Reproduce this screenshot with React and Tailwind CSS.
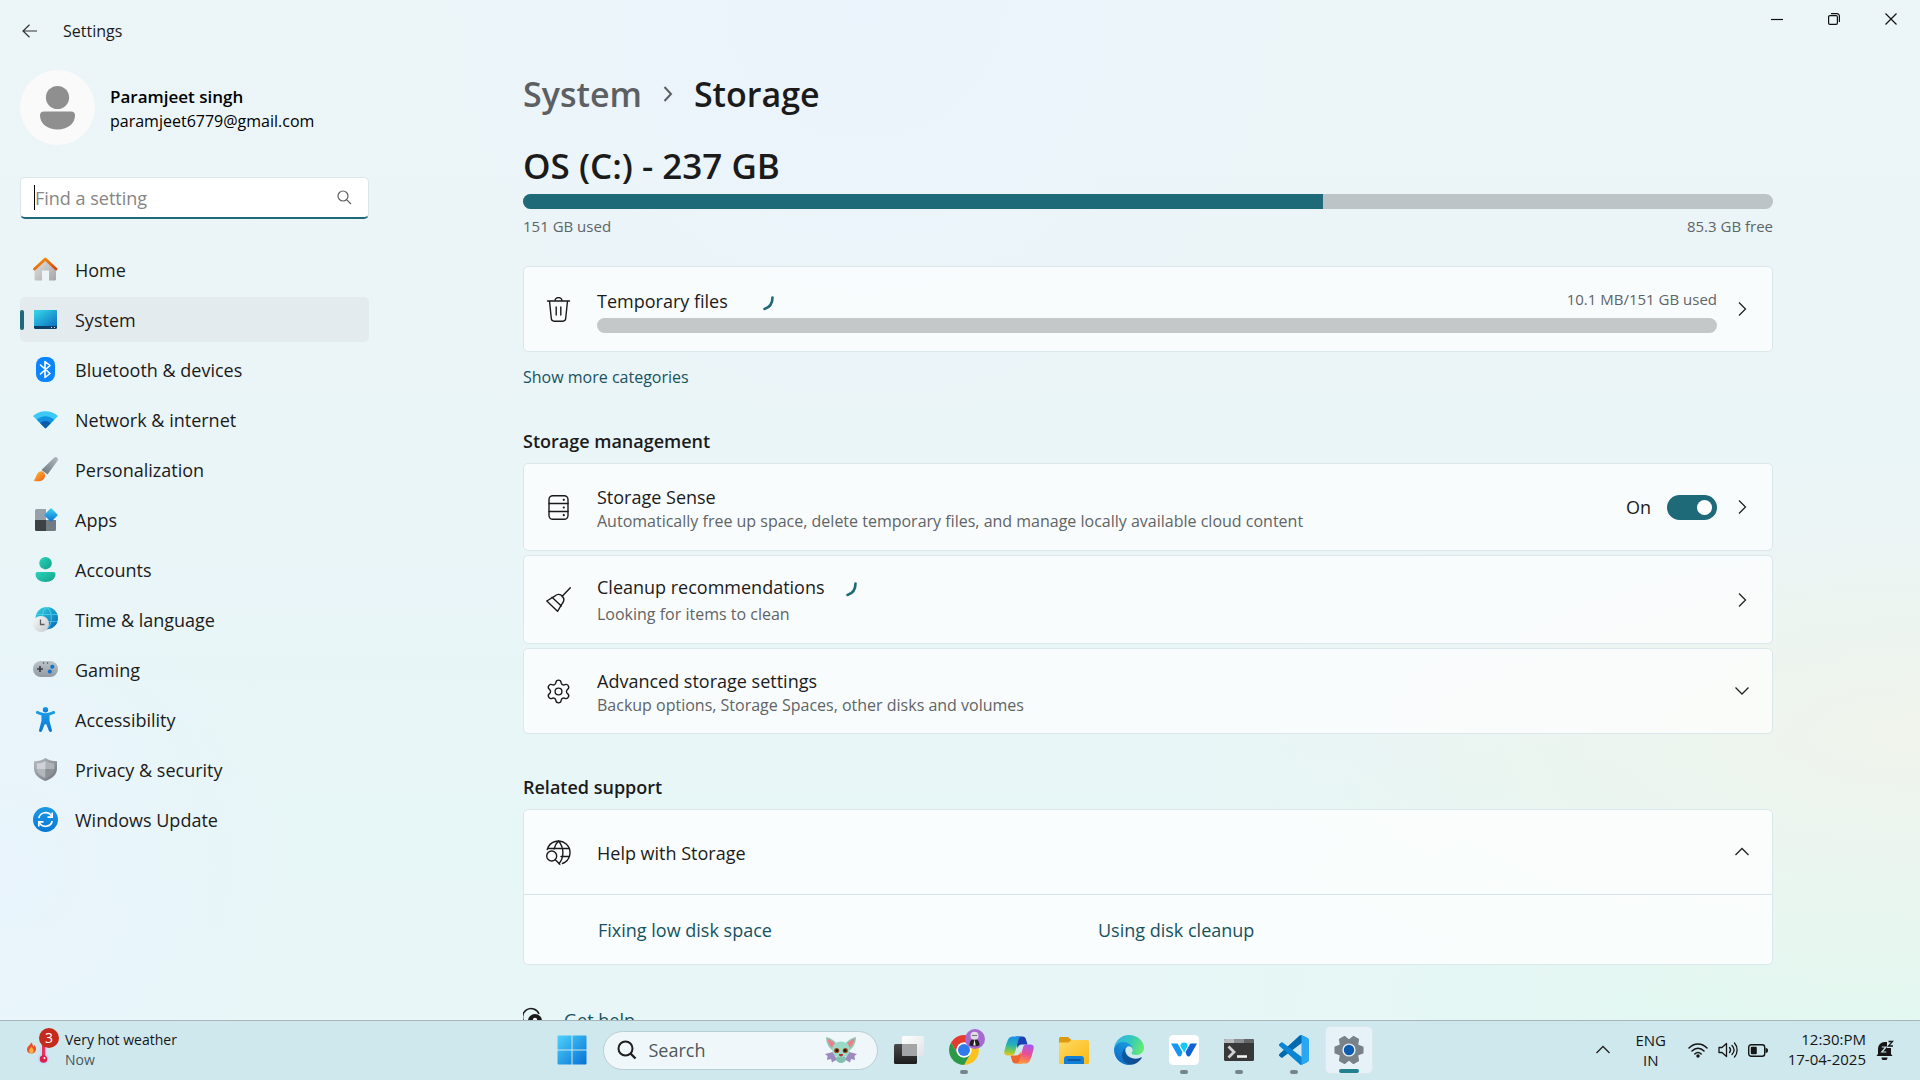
import React from "react";
import { Settings } from "lucide-react";

/* ---------- sidebar icons ---------- */

const HomeIcon = () => (
  <svg viewBox="0 0 25 25" className="size-[25px]" aria-hidden="true">
    <defs>
      <linearGradient id="homeWall" x1="0" y1="0" x2="1" y2="1">
        <stop offset="0" stopColor="#e3e3e3" />
        <stop offset="1" stopColor="#a5a5a5" />
      </linearGradient>
      <linearGradient id="homeRoof" x1="0" y1="0" x2="1" y2="1">
        <stop offset="0" stopColor="#f59b0b" />
        <stop offset="1" stopColor="#d8440f" />
      </linearGradient>
    </defs>
    <path d="M12.500 2 23 12v10a1.500 1.500 0 0 1-1.500 1.500H16V13.500H9v10H3A1.500 1.500 0 0 1 1.500 22V12Z" fill="url(#homeWall)" />
    <path d="M1.500 12 12.300 2 23 12" fill="none" stroke="url(#homeRoof)" strokeWidth="2.800" strokeLinecap="round" strokeLinejoin="round" />
  </svg>
);

const SystemIcon = () => (
  <svg viewBox="0 0 25 25" className="size-[25px]" aria-hidden="true">
    <defs>
      <linearGradient id="sysScreen" x1="0" y1="0" x2="1" y2="1">
        <stop offset="0" stopColor="#36dbe8" />
        <stop offset="1" stopColor="#0c6fc4" />
      </linearGradient>
    </defs>
    <rect x="1" y="3" width="23" height="19" rx="1.500" fill="#0b3f66" />
    <path d="M1 4.500A1.500 1.500 0 0 1 2.500 3h20A1.500 1.500 0 0 1 24 4.500V19H1Z" fill="url(#sysScreen)" />
    <path d="M18 20.500h1M21 20.500h1" stroke="#cfe6f5" strokeWidth="1" />
  </svg>
);

const BluetoothIcon = () => (
  <svg viewBox="0 0 25 25" className="size-[25px]" aria-hidden="true">
    <rect x="3" y="0" width="19" height="25" rx="8" fill="#0a84ff" />
    <path d="m7.500 8 9.500 8.500-5 4v-16l5 4L7.500 17" fill="none" stroke="#fff" strokeWidth="1.600" strokeLinejoin="round" strokeLinecap="round" />
  </svg>
);

const NetworkIcon = () => (
  <svg viewBox="0 0 25 25" className="size-[25px]" aria-hidden="true">
    <path d="M12.500 21.500 0 9C6.500 2.500 18.500 2.500 25 9Z" fill="#3cc9f5" />
    <path d="M12.500 21.500 3.800 12.800C8.500 8 16.500 8 21.200 12.800Z" fill="#1191e0" />
    <path d="M12.500 21.500 7.300 16.300C10 13.200 15 13.200 17.700 16.300Z" fill="#0b5cab" />
  </svg>
);

const BrushIcon = () => (
  <svg viewBox="0 0 25 25" className="size-[25px]" aria-hidden="true">
    <defs>
      <linearGradient id="brushHandle" x1="1" y1="0" x2="0" y2="1">
        <stop offset="0" stopColor="#b4bbc1" />
        <stop offset="1" stopColor="#68737b" />
      </linearGradient>
      <linearGradient id="brushTip" x1="0" y1="0" x2="1" y2="1">
        <stop offset="0" stopColor="#ffc233" />
        <stop offset="1" stopColor="#ee5a1c" />
      </linearGradient>
    </defs>
    <path d="M24.300.7c1 1 .8 2.300.1 3.300L14.500 17.500 8.500 13 20.800.9c1-.9 2.500-1.200 3.500-.2Z" fill="url(#brushHandle)" />
    <path d="M6.200 14.800c2.800-2 7 1.300 5.600 5.400-1.500 4.300-7.600 5-11.300 3.300C2.800 22.500 2.800 17.200 6.200 14.800Z" fill="url(#brushTip)" />
  </svg>
);

const AppsIcon = () => (
  <svg viewBox="0 0 25 25" className="size-[25px]" aria-hidden="true">
    <defs>
      <linearGradient id="appTile" x1="0" y1="0" x2="1" y2="1">
        <stop offset="0" stopColor="#40d3f3" />
        <stop offset="1" stopColor="#0a6fd0" />
      </linearGradient>
    </defs>
    <path d="M2 3.500A1.500 1.500 0 0 1 3.500 2H13v11H2Z" fill="#98a1a9" />
    <path d="M2 13h11v11H3.500A1.500 1.500 0 0 1 2 22.500Z" fill="#3d4144" />
    <path d="M13 13h10v9.500a1.500 1.500 0 0 1-1.500 1.500H13Z" fill="#737b82" />
    <rect x="-5" y="-5" width="10" height="10" rx="1.200" transform="translate(18 8) rotate(45)" fill="url(#appTile)" />
  </svg>
);

const AccountsIcon = () => (
  <svg viewBox="0 0 25 25" className="size-[25px]" aria-hidden="true">
    <defs>
      <linearGradient id="acct" x1="0" y1="0" x2="1" y2="1">
        <stop offset="0" stopColor="#2ad4bb" />
        <stop offset="1" stopColor="#14a088" />
      </linearGradient>
    </defs>
    <circle cx="12.500" cy="6.200" r="6.200" fill="url(#acct)" />
    <path d="M4.500 15h16a2 2 0 0 1 2 2c0 5-4.500 8-10 8s-10-3-10-8a2 2 0 0 1 2-2Z" fill="url(#acct)" />
  </svg>
);

const TimeIcon = () => (
  <svg viewBox="0 0 25 25" className="size-[25px]" aria-hidden="true">
    <defs>
      <linearGradient id="globe" x1="0" y1="0" x2="1" y2="1">
        <stop offset="0" stopColor="#35d6e4" />
        <stop offset="1" stopColor="#0863b5" />
      </linearGradient>
      <linearGradient id="clockFace" x1="0" y1="0" x2="1" y2="1">
        <stop offset="0" stopColor="#fafafa" />
        <stop offset="1" stopColor="#c6c9cc" />
      </linearGradient>
    </defs>
    <circle cx="13.800" cy="11.200" r="11.200" fill="url(#globe)" />
    <path d="M3.500 7.500H24M4 14.500H24M13.800 0c-6 5-6 17 0 22.400M13.800 0c6 5 6 17 0 22.400" fill="none" stroke="#5fe0ef" strokeOpacity=".6" strokeWidth="1.100" />
    <circle cx="8" cy="17" r="8" fill="url(#clockFace)" />
    <path d="M7.500 12.500V17.500h4" fill="none" stroke="#595d61" strokeWidth="1.300" />
  </svg>
);

const GamingIcon = () => (
  <svg viewBox="0 0 25 25" className="size-[25px]" aria-hidden="true">
    <defs>
      <linearGradient id="pad" x1="0" y1="0" x2="0" y2="1">
        <stop offset="0" stopColor="#bcc4ca" />
        <stop offset="1" stopColor="#939aa2" />
      </linearGradient>
    </defs>
    <rect x="0" y="4" width="25" height="16" rx="8" fill="url(#pad)" />
    <path d="M7 9v6M4 12h6" stroke="#3a3f44" strokeWidth="1.700" />
    <circle cx="19.300" cy="9.700" r="2" fill="#0a72d0" />
    <circle cx="16.800" cy="14.500" r="2" fill="#0a72d0" />
    <circle cx="10.500" cy="6" r=".8" fill="#4b5157" />
    <circle cx="14.500" cy="6" r=".8" fill="#4b5157" />
  </svg>
);

const AccessIcon = () => (
  <svg viewBox="0 0 25 25" className="size-[25px]" aria-hidden="true">
    <defs>
      <linearGradient id="acc" x1="0" y1="0" x2="0" y2="1">
        <stop offset="0" stopColor="#1a9ee6" />
        <stop offset="1" stopColor="#0a76d6" />
      </linearGradient>
    </defs>
    <circle cx="12.500" cy="2.700" r="2.700" fill="url(#acc)" />
    <path d="M3 4.700c.4-.9 1.200-1 2-.6C10 6.800 15 6.800 20 4.100c.8-.4 1.600-.3 2 .6.400.9 0 1.600-.8 2L16.500 8.500v5.300l2.400 9.200c.2.900-.2 1.700-1.100 1.900-.9.200-1.600-.2-1.900-1.100L13.300 17.200h-1.600L9.100 23.800c-.3.900-1 1.300-1.900 1.100-.9-.2-1.300-1-1.100-1.900L8.500 13.800V8.500L3.800 6.700c-.8-.4-1.200-1.100-.8-2Z" fill="url(#acc)" />
  </svg>
);

const ShieldIcon = () => (
  <svg viewBox="0 0 25 25" className="size-[25px]" aria-hidden="true">
    <defs>
      <linearGradient id="shield" x1="0" y1="0" x2="1" y2="1">
        <stop offset="0" stopColor="#b7bdc2" />
        <stop offset="1" stopColor="#6d7379" />
      </linearGradient>
    </defs>
    <path d="M12.500 1c3.500 2.500 7 3 11.500 3.200v7.300c0 6-4.500 9.800-11.500 12.500C5.500 21.300 1 17.500 1 11.500V4.200C5.500 4 9 3.500 12.500 1Z" fill="url(#shield)" />
    <path d="M12.500 4C15 5.600 18 6.300 21.300 6.500V12h-8.800Z" fill="#adb3b8" />
    <path d="M12.500 4C10 5.600 7 6.300 3.700 6.500V12h8.800Z" fill="#cfd3d7" />
    <path d="M3.700 12h8.800v9.200C7 18.900 3.900 16 3.700 12Z" fill="#b3b8bd" />
    <path d="M21.300 12h-8.800v9.200c5.500-2.300 8.600-5.200 8.800-9.200Z" fill="#8c9298" />
  </svg>
);

const UpdateIcon = () => (
  <svg viewBox="0 0 25 25" className="size-[25px]" aria-hidden="true">
    <defs>
      <linearGradient id="upd" x1="0" y1="0" x2="0" y2="1">
        <stop offset="0" stopColor="#1a9be4" />
        <stop offset="1" stopColor="#0a76d6" />
      </linearGradient>
    </defs>
    <circle cx="12.500" cy="12.500" r="12.500" fill="url(#upd)" />
    <path d="M5.800 11C7 5 15.500 3.500 18.700 9.300M19.200 14C18 20 9.500 21.500 6.300 15.700" fill="none" stroke="#fff" strokeWidth="1.700" />
    <path d="M19.200 5.500V10.200H14.500M5.800 19.500V14.800h4.700" fill="none" stroke="#fff" strokeWidth="1.700" />
  </svg>
);

/* ---------- page icons ---------- */

const Chevron = ({ dir = "right" }) => {
  const d = {
    right: "M5 1.500l6.500 6.500L5 14.500",
    down: "M1.500 4.500 8 11l6.500-6.500",
    up: "M1.500 11 8 4.500l6.500 6.500",
  }[dir];
  return (
    <svg viewBox="0 0 16 16" className="size-4 shrink-0" fill="none" stroke="#222" strokeWidth="1.300" aria-hidden="true">
      <path d={d} />
    </svg>
  );
};

const lineIcon = {
  viewBox: "0 0 25 25",
  className: "size-[25px] shrink-0",
  fill: "none",
  stroke: "#1a1a1a",
  strokeWidth: 1.4,
  strokeLinecap: "round",
  strokeLinejoin: "round",
  "aria-hidden": true,
};

const TrashIcon = () => (
  <svg {...lineIcon}>
    <path d="M1.500 4h22M9 4a3.500 3.500 0 0 1 7 0M3.500 4l1.800 17.500A3 3 0 0 0 8.200 24.200h8.600a3 3 0 0 0 2.900-2.700L21.500 4M10.200 10v8M14.800 10v8" />
  </svg>
);

const DriveStackIcon = () => (
  <svg {...lineIcon}>
    <rect x="3" y=".7" width="19" height="23.600" rx="3.800" />
    <path d="M3 8.500h19M3 16.500h19" />
    <path d="M17.800 4.800v.01M17.800 12.500v.01M17.800 20.200v.01" strokeWidth="2.200" />
  </svg>
);

const BroomIcon = () => (
  <svg {...lineIcon}>
    <path d="M24.300.8 16 9.500M9.200 8.800c2-2 5.200-1.800 7 .2s2 5 .3 7.200L11.500 24.300.8 14ZM6 10.200 15.300 19" />
  </svg>
);

const GlobeSearchIcon = () => (
  <svg {...lineIcon}>
    <path d="M1.200 9.500a11.600 11.600 0 1 1 15.300 14M13 23.500c4.500-5 6-15 -.5-22.500M12.500 1C10 3.500 8.500 7 8 9M1.800 8.500h21.500M15 16.500h8.500" />
    <circle cx="5.700" cy="16" r="5" />
    <path d="m9.300 19.700 4.500 4.500" />
  </svg>
);

const Spinner = () => (
  <svg viewBox="0 0 16 18" className="mt-1 h-[18px] w-4" fill="none" stroke="#1e6a78" strokeWidth="2.600" strokeLinecap="round" role="img" aria-label="Loading">
    <path d="M12.500 3.500c0 6-3 10-8 11.500" />
  </svg>
);

/* ---------- taskbar icons ---------- */

const StartIcon = () => (
  <svg viewBox="0 0 30 30" className="size-[30px]" aria-hidden="true">
    <defs>
      <linearGradient id="win" x1="0" y1="0" x2="30" y2="30" gradientUnits="userSpaceOnUse">
        <stop offset="0" stopColor="#4fd3fd" />
        <stop offset="1" stopColor="#0470d2" />
      </linearGradient>
    </defs>
    <path d="M1.500.5H14.500V14.500H.5V1.500a1 1 0 0 1 1-1ZM15.500.5h13a1 1 0 0 1 1 1v13h-14ZM.5 15.500h14v14H1.500a1 1 0 0 1-1-1ZM15.500 15.500h14v13a1 1 0 0 1-1 1h-13Z" fill="url(#win)" />
  </svg>
);

const CreatureIcon = () => (
  <svg viewBox="0 0 32 26" className="h-[26px] w-8" aria-hidden="true">
    <path d="M8 15 0 17l2.500 2L2 23l4-1 1 3.500 5-3ZM24 15l8 2-2.500 2 .5 4-4-1-1 3.500-5-3Z" fill="#9b8bbf" />
    <path d="M1 0c5 1 9 4 11 7l-5 6C3 10 1 5 1 0ZM31 0c-5 1-9 4-11 7l5 6c4-3 6-8 6-13Z" fill="#8ecbb8" />
    <path d="M2.300 1.500C6 3 9 5 10.500 7.500L7.500 11C4.500 8.500 2.800 5 2.300 1.500ZM29.700 1.500C26 3 23 5 21.500 7.500l3 3.500c3-2.500 4.700-6 5.200-9.500Z" fill="#ee7f88" />
    <ellipse cx="16" cy="22" rx="5" ry="4" fill="#7fc0ae" />
    <ellipse cx="16" cy="12.500" rx="9" ry="8" fill="#9bdac6" />
    <circle cx="11.700" cy="13.500" r="2.600" fill="#a4501c" />
    <circle cx="20.300" cy="13.500" r="2.600" fill="#a4501c" />
    <circle cx="11.900" cy="13.500" r="1.500" fill="#201512" />
    <circle cx="20.100" cy="13.500" r="1.500" fill="#201512" />
    <path d="M14 17h4c0 1.800-1 2.500-2 2.500S14 18.800 14 17Z" fill="#b02f35" />
  </svg>
);

const TaskViewIcon = () => (
  <svg viewBox="0 0 30 28" className="h-7 w-[30px]" aria-hidden="true">
    <defs>
      <linearGradient id="tvDark" x1="0" y1="0" x2="0" y2="1">
        <stop offset="0" stopColor="#4a4a4a" />
        <stop offset="1" stopColor="#1d1d1d" />
      </linearGradient>
      <linearGradient id="tvLight" x1="0" y1="0" x2="1" y2="1">
        <stop offset="0" stopColor="#fff" />
        <stop offset="1" stopColor="#dfe3e5" />
      </linearGradient>
    </defs>
    <rect x="0" y="8" width="23" height="20" rx="1.500" fill="url(#tvDark)" />
    <rect x="8" y="0" width="22" height="20" rx="1.500" fill="url(#tvLight)" />
    <path d="M8 8h15v12H9.500A1.500 1.500 0 0 1 8 18.500Z" fill="#a3a5a6" />
  </svg>
);

const ChromeIcon = () => (
  <span className="relative">
    <svg viewBox="2 2 44 44" className="size-[30px]" aria-hidden="true">
      <path d="M4.950 13A22 22 0 0 1 43.050 13H24A11 11 0 0 0 14.470 29.500Z" fill="#e33b2e" />
      <path d="M43.050 13A22 22 0 0 1 24 46l9.530-16.500A11 11 0 0 0 24 13Z" fill="#fcc31e" />
      <path d="M24 46A22 22 0 0 1 4.950 13l9.520 16.500a11 11 0 0 0 19.060 0Z" fill="#2a9a48" />
      <circle cx="24" cy="24" r="11" fill="#fff" />
      <circle cx="24" cy="24" r="8.800" fill="#2f7bee" />
    </svg>
    <svg viewBox="0 0 20 20" className="absolute -right-[6px] -top-[6px] size-5" aria-hidden="true">
      <circle cx="10" cy="10" r="10" fill="#a768cf" />
      <path d="M4.500 16.500c0-4.500 2-6.500 5-6.500s5 2 5 6.500l-3 .8H7.500Z" fill="#232026" />
      <path d="M9.500 10 8.300 16.500h2.400Z" fill="#f1f1f1" />
      <circle cx="9.500" cy="6.700" r="4" fill="#dedee2" />
      <path d="M6.800 6.500h5.400" stroke="#77727e" strokeWidth="1" />
    </svg>
  </span>
);

const CopilotIcon = () => (
  <svg viewBox="0 0 30 28" className="h-7 w-[30px]" aria-hidden="true">
    <defs>
      <linearGradient id="cpA" x1=".4" y1="0" x2=".3" y2="1">
        <stop offset="0" stopColor="#1b8fe8" />
        <stop offset=".45" stopColor="#27b4b0" />
        <stop offset=".75" stopColor="#7cc94d" />
        <stop offset="1" stopColor="#f2c21a" />
      </linearGradient>
      <linearGradient id="cpB" x1=".6" y1="0" x2=".4" y2="1">
        <stop offset="0" stopColor="#a758f0" />
        <stop offset=".5" stopColor="#ec4f92" />
        <stop offset="1" stopColor="#ff9a3c" />
      </linearGradient>
    </defs>
    <path d="M12 .5h6.500c2 0 3 1 3.500 3L23.500 8.500H18c-3 0-4 2-4.500 4Z" fill="#1b3fb4" />
    <path d="M18 27.500h-6.500c-2 0-3-1-3.500-3L6.500 19.500H12c3 0 4-2 4.500-4Z" fill="#f0652e" />
    <path d="M9 .5h9c-2 0-3 1.500-3.500 3.500l-3.700 13c-.5 2-2 2.500-3.800 2.500H3.500C1 19.500-.3 18 .5 14.500 2 9 3 5.500 4.200 3.300 5.200 1.300 6.800.5 9 .5Z" fill="url(#cpA)" />
    <path d="M21 27.500h-9c2 0 3-1.500 3.500-3.500l3.700-13c.5-2 2-2.500 3.800-2.500h3.500c2.500 0 3.800 1.500 3 5-1.500 5.500-2.500 9-3.700 11.200-1 2-2.600 2.800-4.800 2.800Z" fill="url(#cpB)" />
  </svg>
);

const FolderIcon = () => (
  <svg viewBox="0 0 30 27" className="h-[27px] w-[30px]" aria-hidden="true">
    <defs>
      <linearGradient id="fold" x1="0" y1="0" x2="1" y2="1">
        <stop offset="0" stopColor="#ffd965" />
        <stop offset="1" stopColor="#fbb912" />
      </linearGradient>
    </defs>
    <path d="M0 1.500A1.500 1.500 0 0 1 1.500 0H9l3.500 3H28v6H0Z" fill="#dc9a0c" />
    <path d="M0 5.500h9.500L12.500 3H28.500A1.500 1.500 0 0 1 30 4.500v21A1.500 1.500 0 0 1 28.500 27h-27A1.500 1.500 0 0 1 0 25.500Z" fill="url(#fold)" />
    <path d="M5 27v-5a3 3 0 0 1 3-3h14a3 3 0 0 1 3 3v5Z" fill="#147fd6" />
    <path d="M9 23h12" stroke="#0a4f92" strokeWidth="1.400" strokeLinecap="round" />
  </svg>
);

const EdgeIcon = () => (
  <svg viewBox="0 0 256 256" className="size-[30px]" aria-hidden="true">
    <defs>
      <linearGradient id="edA" x1="0" y1=".5" x2="1" y2=".6">
        <stop offset="0" stopColor="#0c59a4" />
        <stop offset="1" stopColor="#114a8b" />
      </linearGradient>
      <linearGradient id="edB" x1=".7" y1="0" x2=".2" y2="1">
        <stop offset="0" stopColor="#1b9de2" />
        <stop offset="1" stopColor="#0a67c4" />
      </linearGradient>
      <linearGradient id="edC" x1="0" y1=".3" x2="1" y2=".6">
        <stop offset="0" stopColor="#2fb5ea" />
        <stop offset=".5" stopColor="#35c8bd" />
        <stop offset="1" stopColor="#66eb6e" />
      </linearGradient>
    </defs>
    <g transform="translate(-4.630 -4.920)">
      <path fill="url(#edA)" d="M235.680 195.460a93.730 93.730 0 0 1-10.540 4.710 101.870 101.870 0 0 1-35.900 6.460c-47.320 0-88.540-32.550-88.540-74.320A31.480 31.480 0 0 1 117.130 105c-42.800 1.800-53.800 46.400-53.800 72.530 0 73.880 68.090 81.370 82.760 81.370 7.910 0 19.840-2.300 27-4.560l1.310-.44a128.340 128.340 0 0 0 66.600-52.800 4 4 0 0 0-5.320-5.640z" />
      <path fill="url(#edB)" d="M110.340 246.340A79.200 79.200 0 0 1 87.600 225a80.720 80.720 0 0 1 29.530-120c3.120-1.470 8.450-4.130 15.540-4a32.350 32.350 0 0 1 25.690 13 31.880 31.880 0 0 1 6.360 18.660c0-.21 24.460-79.600-80-79.600-43.900 0-80 41.660-80 78.210a130.150 130.150 0 0 0 12.110 56 128 128 0 0 0 156.380 67.110 75.550 75.550 0 0 1-62.780-8z" />
      <path fill="url(#edC)" d="M156.940 153.780c-.81 1.050-3.300 2.500-3.300 5.660 0 2.610 1.700 5.120 4.720 7.230 14.380 10 41.490 8.680 41.560 8.680a59.560 59.560 0 0 0 30.270-8.350 61.380 61.380 0 0 0 30.430-52.880c.26-22.410-8-37.310-11.340-43.910-21.190-41.450-66.930-65.290-116.670-65.290a128 128 0 0 0-128 126.200c.48-36.540 36.800-66.050 80-66.050 3.500 0 23.460.34 42 10.070 16.340 8.580 24.900 18.940 30.850 29.210 6.180 10.670 7.280 24.150 7.280 29.520s-2.740 13.330-7.800 19.910z" />
    </g>
  </svg>
);

const WebexIcon = () => (
  <svg viewBox="0 0 30 30" className="size-[30px]" aria-hidden="true">
    <rect width="30" height="30" rx="4.500" fill="#fff" />
    <path d="M28 8.500h-5.500c-1 0-1.500.5-1.800 1.300L16.500 17l1.200 3.500c.9 1.400 2.900 1.400 3.600 0Z" fill="#1260d2" />
    <path d="M2 8.500h5.500c1 0 1.500.5 1.800 1.300L13.500 17l-1.200 3.500c-.9 1.400-2.900 1.400-3.600 0Z" fill="#1596f2" />
    <path d="M11.300 10.700a3.800 3.800 0 0 1 7.500 0L15.200 17.500Z" fill="#15c8f5" />
  </svg>
);

const TerminalIcon = () => (
  <svg viewBox="0 0 30 22" className="h-[22px] w-[30px]" aria-hidden="true">
    <rect width="30" height="22" rx="1.500" fill="#383838" />
    <path d="M1.500 0H10v4H0V1.500A1.500 1.500 0 0 1 1.500 0Z" fill="#b9bcbe" />
    <path d="M10 0h10v4H10Z" fill="#8c8f91" />
    <path d="M20 0h8.500A1.500 1.500 0 0 1 30 1.500V4H20Z" fill="#626466" />
    <path d="m4.500 7.500 5.500 5.500-5.500 5.500" fill="none" stroke="#d2d2d2" strokeWidth="2.800" />
    <path d="M13 17.500h10" stroke="#f2f2f2" strokeWidth="2.600" />
  </svg>
);

const CodeIcon = () => (
  <svg viewBox="0 0 100 100" className="size-[30px]" aria-hidden="true">
    <path fill="#0069b0" d="M96.460 10.800 75.870.88a6.230 6.230 0 0 0-7.100 1.200L1.300 63.580a4.170 4.170 0 0 0 0 6.170l5.500 5a4.170 4.170 0 0 0 5.330.24l81.200-61.600c2.720-2.070 6.630-.13 6.630 3.290v-.24a6.250 6.250 0 0 0-3.540-5.630z" />
    <path fill="#0a85d4" d="M96.460 89.200 75.870 99.120a6.230 6.230 0 0 1-7.100-1.210L1.300 36.420a4.170 4.170 0 0 1 0-6.170l5.500-5a4.170 4.170 0 0 1 5.330-.24l81.200 61.600c2.720 2.070 6.630.13 6.630-3.290v.24a6.250 6.250 0 0 1-3.540 5.630z" />
    <path fill="#2aa6f2" d="M75.870 99.130a6.230 6.230 0 0 1-7.100-1.210c2.300 2.300 6.250.67 6.250-2.590V4.670c0-3.260-3.950-4.900-6.250-2.600a6.230 6.230 0 0 1 7.100-1.200l20.590 9.900A6.250 6.250 0 0 1 100 16.400v67.200a6.250 6.250 0 0 1-3.540 5.630z" />
  </svg>
);

const GearIcon = () => (
  <svg viewBox="-15 -15 30 30" className="size-[30px]" aria-hidden="true">
    <g fill="#79828a" stroke="#79828a" strokeWidth="1.500" strokeLinejoin="round">
      <circle r="10.500" stroke="none" />
      {[30, 90, 150, 210, 270, 330].map((a) => (
        <path key={a} d="M-5-8-2.800-13.800H2.800L5-8Z" transform={`rotate(${a})`} />
      ))}
    </g>
    <circle r="6.600" fill="#e6eef2" />
    <circle r="5.200" fill="#0b5cae" />
  </svg>
);

const WeatherIcon = () => (
  <span className="relative h-9 w-8">
    <svg viewBox="0 0 32 36" className="h-9 w-8" aria-hidden="true">
      <path d="M5 10.500c0 2-4 3.500-4 7C1 20 2.800 21.500 5.300 21.500S10 20 10 17c0-2-1-3.500-1.800-4-.2 1-.7 1.500-1.200 1.500C7 13 6.500 11.500 5 10.500Z" fill="#e8512c" />
      <path d="M5.500 15c-1.500 1.500-2.300 2.700-2.300 4 0 1.500 1 2.200 2.200 2.200s2.300-.8 2.300-2.200c0-1.400-1-2.500-2.200-4Z" fill="#fdb23c" />
      <circle cx="17.500" cy="26.500" r="6" fill="#c3dcf8" />
      <rect x="14" y="12" width="7" height="16" rx="3.500" fill="#c3dcf8" />
      <rect x="16" y="13" width="3.200" height="15" fill="#e8325a" />
      <circle cx="17.500" cy="27" r="3.800" fill="#dd1f4c" />
      <circle cx="18.500" cy="26" r="1" fill="#fff" />
    </svg>
    <span className="absolute -top-1 left-[13px] flex size-5 items-center justify-center rounded-full bg-[#c42b1c] text-sm leading-5 text-white">3</span>
  </span>
);

const navItems = [
  ["Home", HomeIcon],
  ["System", SystemIcon],
  ["Bluetooth & devices", BluetoothIcon],
  ["Network & internet", NetworkIcon],
  ["Personalization", BrushIcon],
  ["Apps", AppsIcon],
  ["Accounts", AccountsIcon],
  ["Time & language", TimeIcon],
  ["Gaming", GamingIcon],
  ["Accessibility", AccessIcon],
  ["Privacy & security", ShieldIcon],
  ["Windows Update", UpdateIcon],
];

const taskApps = [
  ["Task view", TaskViewIcon, ""],
  ["Google Chrome", ChromeIcon, "open"],
  ["Copilot", CopilotIcon, ""],
  ["File Explorer", FolderIcon, ""],
  ["Microsoft Edge", EdgeIcon, ""],
  ["Webex", WebexIcon, "open"],
  ["Terminal", TerminalIcon, "open"],
  ["Visual Studio Code", CodeIcon, "open"],
  ["Settings", GearIcon, "active"],
];

const cardBase = "flex w-full items-center rounded-[5px] border border-[#dbe7ea] bg-white/70 pl-[22px] pr-[22px]";
const titleText = "text-lg leading-6 text-[#1b1b1b]";
const noteText = "text-base leading-6 text-[#606466]";
const captionText = "text-[15px] leading-6 text-[#606466]";
const groupHeading = "mt-[41px] text-lg font-semibold leading-6 text-[#1b1b1b]";

function Sidebar() {
  return (
    <aside className="w-[349px] shrink-0 pt-[6px]">
      <div className="flex items-center gap-[15px]">
        <svg viewBox="0 0 75 75" className="size-[75px]" role="img" aria-label="Profile picture">
          <circle cx="37.500" cy="37.500" r="37.500" fill="#fafafa" />
          <circle cx="37.500" cy="27.500" r="11.600" fill="#8f8f8f" />
          <path d="M24 41.500h27a4 4 0 0 1 4 4C55 54 47 59.500 37.500 59.500S20 54 20 45.500a4 4 0 0 1 4-4Z" fill="#8f8f8f" />
        </svg>
        <div className="pt-0.5 text-black">
          <p className="text-[17px] font-semibold leading-6">Paramjeet singh</p>
          <p className="text-base leading-6">paramjeet6779@gmail.com</p>
        </div>
      </div>

      <label className="mt-8 flex h-[42px] items-center rounded-[5px] border border-b-2 border-[#dce7ea] border-b-[#1e6a78] bg-white pl-[13px] pr-4">
        <span className="h-[25px] w-px bg-black" />
        <input type="text" aria-label="Find a setting" placeholder="Find a setting" className="min-w-0 flex-1 bg-transparent text-lg leading-6 outline-none placeholder:text-[#868686]" />
        <svg viewBox="0 0 15 15" className="size-[15px]" fill="none" stroke="#5f5f5f" strokeWidth="1.200" aria-hidden="true">
          <circle cx="6" cy="6" r="5" />
          <path d="m9.600 9.600 4.400 4.400" />
        </svg>
      </label>

      <nav className="mt-7 flex flex-col gap-[5px]">
        {navItems.map(([name, Icon]) => (
          <a
            key={name}
            href="#"
            className={
              "flex h-[45px] items-center rounded-[5px] text-lg leading-6 text-[#1b1b1b] " +
              (name === "System" ? "bg-[#e3ebee]" : "")
            }
          >
            <span className={"mr-[9px] h-5 w-1 rounded-full " + (name === "System" ? "bg-[#1e6a78]" : "")} />
            <Icon />
            <span className="ml-[17px] pt-px">{name}</span>
          </a>
        ))}
      </nav>
    </aside>
  );
}

function Storage() {
  return (
    <main className="flex min-w-0 flex-1 justify-center pl-[7px] pt-[6px]">
      <div className="w-full max-w-[1250px]">
        <h1 className="flex items-center text-[34px] font-semibold leading-[48px] text-[#1b1b1b]">
          <a href="#" className="text-[#5c6063]">System</a>
          <svg viewBox="0 0 12 18" className="mx-5 h-[18px] w-3" fill="none" stroke="#5c6063" strokeWidth="2" aria-hidden="true">
            <path d="m2.500 2 6.500 7-6.500 7" />
          </svg>
          <span>Storage</span>
        </h1>

        <h2 className="mt-[26px] text-[35px] font-semibold leading-[44px] text-[#1b1b1b]">OS (C:) - 237 GB</h2>
        <div className="mt-[6px] h-[15px] overflow-hidden rounded-full bg-[#bcc4c7]">
          <div className="h-full w-[64%] bg-[#1e6a78]" />
        </div>
        <div className={"mt-[5px] flex justify-between " + captionText}>
          <span>151 GB used</span>
          <span>85.3 GB free</span>
        </div>

        <button type="button" className={cardBase + " mt-7 min-h-[86px] text-left"}>
          <TrashIcon />
          <span className="ml-[26px] mr-[17px] block flex-1 pt-1">
            <span className="flex items-start justify-between pb-[5px]">
              <span className={"flex items-center gap-8 " + titleText}>
                Temporary files
                <Spinner />
              </span>
              <span className={captionText + " -mt-0.5"}>10.1 MB/151 GB used</span>
            </span>
            <span className="block h-[15px] rounded-full bg-[#c5c8c9]" />
          </span>
          <Chevron />
        </button>
        <a href="#" className="mt-[14px] block w-fit text-base leading-[22px] text-[#17525f]">Show more categories</a>

        <h3 className={groupHeading}>Storage management</h3>
        <div className="mt-[10px] flex flex-col gap-1">
          <div className={cardBase + " min-h-[88px]"}>
            <DriveStackIcon />
            <div className="ml-[26px] flex-1 pt-1">
              <p className={titleText}>Storage Sense</p>
              <p className={noteText}>Automatically free up space, delete temporary files, and manage locally available cloud content</p>
            </div>
            <label className="mr-[17px] flex items-center gap-4">
              <span className={titleText}>On</span>
              <input
                type="checkbox"
                role="switch"
                aria-label="Storage Sense"
                defaultChecked
                className="h-[25px] w-[50px] appearance-none rounded-full bg-[#1e6a78] p-[5px] before:ml-auto before:block before:size-[15px] before:rounded-full before:bg-white"
              />
            </label>
            <Chevron />
          </div>

          <button type="button" className={cardBase + " min-h-[89px] text-left"}>
            <BroomIcon />
            <span className="ml-[26px] flex flex-1 flex-col gap-[3px] pt-0.5">
              <span className={"flex items-center gap-[18px] " + titleText}>
                Cleanup recommendations
                <Spinner />
              </span>
              <span className={noteText}>Looking for items to clean</span>
            </span>
            <Chevron />
          </button>

          <button type="button" aria-expanded="false" className={cardBase + " min-h-[86px] text-left"}>
            <Settings viewBox="1 1 22 22" className="size-[25px] shrink-0 text-[#1a1a1a]" strokeWidth={1.2} />
            <span className="ml-[26px] flex flex-1 flex-col pt-1">
              <span className={titleText}>Advanced storage settings</span>
              <span className={noteText}>Backup options, Storage Spaces, other disks and volumes</span>
            </span>
            <Chevron dir="down" />
          </button>
        </div>

        <h3 className={groupHeading}>Related support</h3>
        <section className="mt-[10px] rounded-[5px] border border-[#dbe7ea] bg-white/75">
          <button type="button" aria-expanded="true" className="flex min-h-[84px] w-full items-center px-[22px] text-left">
            <GlobeSearchIcon />
            <span className={"ml-[26px] flex-1 pt-0.5 " + titleText}>Help with Storage</span>
            <Chevron dir="up" />
          </button>
          <div className="grid h-[70px] grid-cols-[500px_1fr] items-center border-t border-[#d5e4e6] pl-[74px] text-lg leading-6 text-[#17525f]">
            <a href="#" className="w-fit">Fixing low disk space</a>
            <a href="#" className="w-fit">Using disk cleanup</a>
          </div>
        </section>

        <a href="#" className="mt-[42px] flex w-fit items-center gap-[21px] text-lg leading-6 text-[#17525f]">
          <svg viewBox="0 0 20 25" className="h-[25px] w-5" aria-hidden="true">
            <path d="M2 16A8.500 8.500 0 1 1 16 7" fill="none" stroke="#1a1a1a" strokeWidth="1.500" />
            <circle cx="12" cy="14" r="7" fill="#1a1a1a" />
            <circle cx="12" cy="13" r="2.200" fill="#f3fafa" />
          </svg>
          Get help
        </a>
      </div>
    </main>
  );
}

function Taskbar() {
  return (
    <footer className="grid h-[60px] shrink-0 grid-cols-[1fr_auto_1fr] items-center border-t border-[#a8b5b9] bg-[#cfe8ee] pb-px text-[15px] leading-5 text-[#161616]">
      <button type="button" className="flex w-fit items-center gap-[7px] pl-[26px] text-left">
        <WeatherIcon />
        <span className="flex flex-col pb-px text-sm leading-5">
          <span>Very hot weather</span>
          <span className="text-[#4c575b]">Now</span>
        </span>
      </button>

      <div className="flex items-center gap-[7px]">
        <button type="button" aria-label="Start" className="flex size-12 items-center justify-center">
          <StartIcon />
        </button>
        <label className="flex h-[39px] w-[275px] items-center rounded-full border border-[#b9ced4] bg-[#eff7fa] pl-[13px] pr-5">
          <svg viewBox="0 0 20 20" className="size-5" fill="none" stroke="#1f1f1f" strokeWidth="2" aria-hidden="true">
            <circle cx="8.500" cy="8.500" r="7" />
            <path d="m13.500 13.500 5 5" strokeWidth="2.400" />
          </svg>
          <input type="text" aria-label="Search" placeholder="Search" className="ml-3 min-w-0 flex-1 bg-transparent text-lg leading-6 outline-none placeholder:text-[#50585b]" />
          <CreatureIcon />
        </label>
        {taskApps.map(([name, Icon, state]) => (
          <button
            key={name}
            type="button"
            aria-label={name}
            className={
              "relative flex size-12 items-center justify-center rounded-[5px] " +
              (state === "active" ? "border border-[#d9e8ed] bg-[#e6f2f7]" : "")
            }
          >
            <Icon />
            {state === "open" && <span className="absolute bottom-0 left-5 h-1 w-2 rounded-full bg-[#75868b]" />}
            {state === "active" && <span className="absolute bottom-0 left-[13px] h-1 w-5 rounded-full bg-[#23808f]" />}
          </button>
        ))}
      </div>

      <div className="flex items-center justify-end pr-[26px]">
        <button type="button" aria-label="Show hidden icons">
          <Chevron dir="up" />
        </button>
        <button type="button" className="ml-[15px] w-[50px] text-center">
          ENG
          <br />
          IN
        </button>
        <button type="button" aria-label="Network, sound and battery" className="ml-3 flex items-center gap-[10px]">
          <svg viewBox="0 0 20 16" className="h-4 w-5" fill="none" stroke="#161616" strokeWidth="1.500" strokeLinecap="round" aria-hidden="true">
            <path d="M1 6c5-5.500 13-5.500 18 0M4 9c3.500-3.700 8.500-3.700 12 0M6.800 12c2-2 4.400-2 6.400 0" />
            <circle cx="10" cy="14" r="1" fill="#161616" />
          </svg>
          <svg viewBox="0 0 20 18" className="h-[18px] w-5" fill="none" stroke="#161616" strokeWidth="1.300" strokeLinecap="round" strokeLinejoin="round" aria-hidden="true">
            <path d="M1 6.500v5h3L8.500 15.500V2.500L4 6.500ZM11.500 6.500c1.300 1.500 1.300 3.500 0 5M14 4.500c2.500 2.700 2.500 6.300 0 9M16.500 2c3.500 4 3.500 10 0 14" />
          </svg>
          <svg viewBox="0 0 20 13" className="h-[13px] w-5" aria-hidden="true">
            <rect x=".7" y=".7" width="16" height="11.600" rx="2.500" fill="none" stroke="#161616" strokeWidth="1.400" />
            <rect x="2.800" y="2.800" width="6" height="7.400" rx="1" fill="#161616" />
            <path d="M17.500 4c2 0 2.500 1 2.500 2.500S19.500 9 17.500 9Z" fill="#161616" />
          </svg>
        </button>
        <button type="button" className="ml-5 pb-0.5 text-right">
          12:30:PM
          <br />
          17-04-2025
        </button>
        <button type="button" aria-label="Notifications" className="ml-[10px]">
          <svg viewBox="0 0 18 20" className="h-5 w-[18px]" aria-hidden="true">
            <path d="M2 14V8.500A6.500 6.500 0 0 1 8.500 2H11v6h4v6l1.500 2H.5ZM5.500 17.500h6a3 3 0 0 1-6 0Z" fill="#161616" />
            <path d="M5.800 7h4.200l-4.200 5h4.500" fill="none" stroke="#cfe8ee" strokeWidth="1.200" />
            <path d="M12.500 1.500h4l-4 4.500h4.500" fill="none" stroke="#161616" strokeWidth="1.300" />
          </svg>
        </button>
      </div>
    </footer>
  );
}

export default function App() {
  return (
    <div className="flex h-screen flex-col overflow-hidden bg-[#eaf5f8] font-['Open_Sans','Noto_Sans',sans-serif]">
      <div className="flex min-h-0 flex-1 flex-col overflow-hidden bg-[radial-gradient(ellipse_at_100%_72%,#f0f4ec_0%,#f0f4ec00_28%),radial-gradient(ellipse_at_97%_100%,#e2f8f0_0%,#e2f8f000_30%),radial-gradient(circle_at_0%_85%,#e9f4fc_0%,#e9f4fc00_14%),radial-gradient(ellipse_at_45%_0%,#ebf4fc_0%,#ebf4fc00_30%),linear-gradient(to_bottom,#ecf5f8_0%,#eaf5f8_50%,#e7f6f7_80%,#e8f6f8_100%)]">
        <header className="flex h-16 shrink-0 items-center justify-between">
          <div className="flex items-center gap-[25px] pb-0.5 pl-[22px]">
            <button type="button" aria-label="Back">
              <svg viewBox="0 0 16 14" className="h-[14px] w-4" fill="none" stroke="#333" strokeWidth="1.200" aria-hidden="true">
                <path d="M15 7H1M7.500.8 1 7l6.500 6.200" />
              </svg>
            </button>
            <span className="text-base leading-5 text-[#1b1b1b]">Settings</span>
          </div>
          <div className="flex self-start pr-px">
            <button type="button" aria-label="Minimize" className="flex h-[38px] w-[57px] items-center justify-center">
              <svg viewBox="0 0 12 12" className="size-3" stroke="#111" strokeWidth="1.200" aria-hidden="true">
                <path d="M0 6.500h12" />
              </svg>
            </button>
            <button type="button" aria-label="Restore" className="flex h-[38px] w-[57px] items-center justify-center">
              <svg viewBox="0 0 12 12" className="size-3" fill="none" stroke="#111" strokeWidth="1.200" aria-hidden="true">
                <rect x=".6" y="2.600" width="8.800" height="8.800" rx="1.300" />
                <path d="M3 .6h6a2.400 2.400 0 0 1 2.400 2.400v6" />
              </svg>
            </button>
            <button type="button" aria-label="Close" className="flex h-[38px] w-[57px] items-center justify-center">
              <svg viewBox="0 0 12 12" className="size-3" stroke="#111" strokeWidth="1.200" aria-hidden="true">
                <path d="m.5.5 11 11M11.500.5l-11 11" />
              </svg>
            </button>
          </div>
        </header>
        <div className="flex min-h-0 flex-1 pl-5">
          <Sidebar />
          <Storage />
        </div>
      </div>
      <Taskbar />
    </div>
  );
}
